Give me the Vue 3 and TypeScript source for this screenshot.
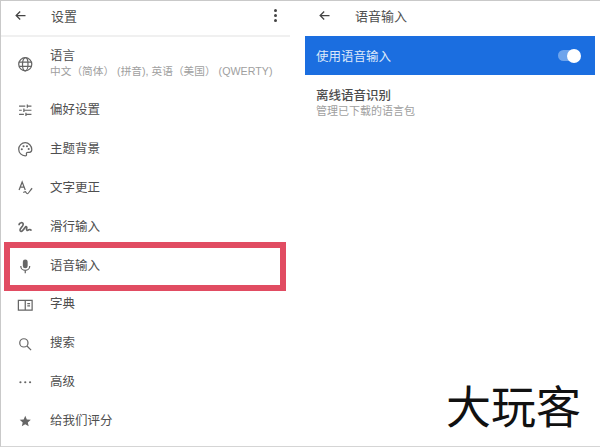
<template>
  <div class="shot">
    <section class="panel panel--left">
      <header class="bar">
        <svg class="back" viewBox="0 0 24 24"><path d="M20 12H5.500M11.500 5.500 5 12l6.500 6.500" /></svg>
        <span class="bar__title">设置</span>
        <span class="more"><i /><i /><i /></span>
      </header>
      <ul class="menu">
        <li v-for="item in items" :key="item.label" class="row" :class="{ 'row--tall': item.sub }">
          <svg class="ico" viewBox="0 0 24 24" v-html="item.icon" />
          <div class="row__text">
            <div>{{ item.label }}</div>
            <div v-if="item.sub" class="row__sub">{{ item.sub }}</div>
          </div>
          <div v-if="item.marked" class="mark" />
        </li>
      </ul>
    </section>
    <section class="panel panel--right">
      <header class="bar bar--right">
        <svg class="back" viewBox="0 0 24 24"><path d="M20 12H5.500M11.500 5.500 5 12l6.500 6.500" /></svg>
        <span class="bar__title">语音输入</span>
      </header>
      <div class="switch-row">
        <span>使用语音输入</span>
        <span class="toggle"><i /></span>
      </div>
      <div class="offline">
        <div class="offline__title">离线语音识别</div>
        <div class="row__sub">管理已下载的语言包</div>
      </div>
      <div class="brand">大玩客</div>
    </section>
  </div>
</template>

<script setup lang="ts">
const items = [
  {
    label: '语言',
    sub: '中文（简体） (拼音), 英语（美国） (QWERTY)',
    icon: '<g class="ln"><circle cx="12" cy="12" r="9.500"/><ellipse cx="12" cy="12" rx="4" ry="9.500"/><path d="M3 9h18M3 15h18"/></g>',
  },
  { label: '偏好设置', icon: '<path class="ln" d="M3 6h9M15 6h6M15 3.500v5M3 12h4M10 12h11M10 9.500v5M3 18h7M13 18h8M13 15.500v5"/>' },
  {
    label: '主题背景',
    icon: '<path class="ln" d="M12 2.500a9.500 9.500 0 1 0 0 19c1.600 0 2.200-1.100 1.800-2.200-.5-1.400.3-2.800 1.900-2.800H18c2 0 3.500-1.500 3.500-4C21.500 7 17 2.500 12 2.500Z"/><circle cx="7" cy="12" r="1.500"/><circle cx="9.500" cy="7.500" r="1.500"/><circle cx="14.500" cy="7.500" r="1.500"/><circle cx="17" cy="11.500" r="1.500"/>',
  },
  { label: '文字更正', icon: '<path class="ln" d="M3 14.500 7.500 3l4.500 11.500M4.500 10.500h6M9 18c1.500 0 2-1 3-1s1.500 3 3 3c1.500 0 3.500-4 7-8" />' },
  { label: '滑行输入', icon: '<path class="ln ln--bold" d="M3 9c0-4 6-5 6-1.500 0 4-6 6-4.500 9.500C6 20 10 15 12 12c1.500-2 3-.5 2 2-.8 2.500 1 3 2.500 2 1.500-1 3.500-1 4.500 1" />' },
  {
    label: '语音输入',
    marked: true,
    icon: '<rect x="8.500" y="2" width="7" height="13" rx="3.500"/><path class="ln" d="M5.500 11.500a6.500 6.500 0 0 0 13 0M12 18v4"/>',
  },
  { label: '字典', icon: '<path class="ln" d="M2 5h20v14H2zM12 5v14M15 9.500h4M15 13h4" />' },
  { label: '搜索', icon: '<circle class="ln" cx="10" cy="10" r="6"/><path class="ln" d="m14.500 14.500 6 6"/>' },
  { label: '高级', icon: '<circle cx="5" cy="12" r="1.600"/><circle cx="12" cy="12" r="1.600"/><circle cx="19" cy="12" r="1.600"/>' },
  { label: '给我们评分', icon: '<path d="m12 4 2.300 5.400 5.800.5-4.400 3.800 1.300 5.700-5-3-5 3 1.300-5.700-4.400-3.800 5.800-.5Z"/>' },
]
</script>

<style>
body { margin: 0; background: #fff; }
</style>

<style scoped>
.shot {
  display: flex;
  width: 600px;
  height: 447px;
  box-sizing: border-box;
  border-top: 1px solid #c9c9c9;
  border-left: 1px solid #c9c9c9;
  border-bottom: 1px solid #d5d5d5;
  background: #fff;
  color: #4f4f4f;
  font-family: "Liberation Sans", "Noto Sans CJK SC", sans-serif;
  font-size: 12.500px;
  overflow: hidden;
}
.panel--left { width: 289px; }
.panel--right {
  position: relative;
  flex: 1;
  padding: 0 5px 0 15px;
}
.bar {
  display: flex;
  align-items: center;
  box-sizing: border-box;
  height: 36px;
  padding: 0 10px 6px 12px;
  border-bottom: 2px solid #f0f0f0;
}
.bar--right {
  height: 35px;
  padding: 0 0 6px 12px;
  border-bottom: 0;
}
.back {
  flex: none;
  width: 15px;
  height: 15px;
  margin-right: 23px;
  fill: none;
  stroke: #444;
  stroke-width: 2;
}
.bar__title { font-size: 13px; }
.more {
  display: flex;
  flex-direction: column;
  gap: 2px;
  margin-left: auto;
  margin-right: 3px;
}
.more i {
  width: 3px;
  height: 3px;
  border-radius: 50%;
  background: #444;
}
.menu {
  margin: 0;
  padding: 0;
  list-style: none;
}
.row {
  position: relative;
  display: flex;
  align-items: center;
  gap: 17px;
  height: 38.900px;
  padding-left: 15.500px;
}
.row--tall { height: 54px; }
.row--tall .row__text { margin-top: -2px; }
.row__text { line-height: 15px; }
.row__sub {
  color: #a0a0a0;
  font-size: 10.700px;
  line-height: 14px;
  white-space: nowrap;
}
.ico {
  flex: none;
  width: 16.500px;
  height: 16.500px;
  fill: #666;
}
.ico :deep(.ln) {
  fill: none;
  stroke: #666;
  stroke-width: 1.800;
}
.ico :deep(.ln--bold) { stroke-width: 2.400; }
.mark {
  position: absolute;
  left: 3px;
  top: -5px;
  width: 282px;
  height: 49px;
  box-sizing: border-box;
  border: 6px solid #e14c62;
}
.switch-row {
  display: flex;
  align-items: center;
  justify-content: space-between;
  height: 39px;
  padding: 0 15px 0 11px;
  background: #1b6ee0;
  color: #dbe8fa;
}
.toggle {
  position: relative;
  width: 22px;
  height: 11px;
  border-radius: 6px;
  background: #6ea4ec;
}
.toggle i {
  position: absolute;
  right: -1px;
  top: -1.500px;
  width: 14px;
  height: 14px;
  border-radius: 50%;
  background: #fff;
}
.offline {
  padding: 14px 0 0 11px;
  line-height: 15px;
}
.offline .row__sub { font-size: 11px; }
.offline__title { font-weight: 500; color: #4d4d4d; }
.brand {
  position: absolute;
  right: 19px;
  bottom: 9px;
  color: #111;
  font-size: 45px;
  line-height: 56px;
  white-space: nowrap;
}
</style>
